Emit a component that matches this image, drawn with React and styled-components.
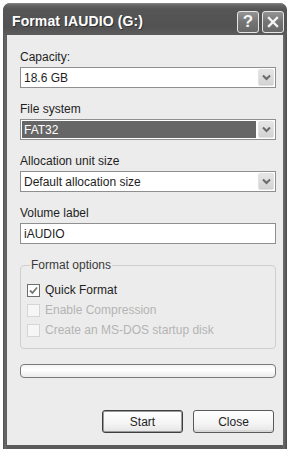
import React from "react";
import styled, { createGlobalStyle } from "styled-components";

const GlobalStyle = createGlobalStyle`
  html, body {
    margin: 0;
    padding: 0;
    background: #ffffff;
  }
  body {
    font-family: "Liberation Sans", Arial, sans-serif;
  }
`;

const Window = styled.div`
  width: 284px;
  height: 446px;
  margin: 3px 0 0 3px;
  box-sizing: border-box;
  border-radius: 7px 7px 0 0;
  background: linear-gradient(90deg, #4e4e4e 0px, #6a6a6a 2px, #5a5a5a 4px, #5a5a5a 278px, #6a6a6a 281px, #4a4a4a 284px);
  padding: 0 4px 4px 4px;
  display: flex;
  flex-direction: column;
  overflow: hidden;
`;

const TitleBar = styled.div`
  height: 32px;
  flex-shrink: 0;
  margin: 0 -4px;
  padding: 3px 3px 0 9px;
  box-sizing: border-box;
  display: flex;
  align-items: center;
  background: linear-gradient(180deg, #8a8a8a 0px, #666 2px, #565656 6px, #525252 24px, #5c5c5c 32px);
  border-radius: 7px 7px 0 0;
`;

const Title = styled.div`
  flex: 1;
  color: #fff;
  font-weight: bold;
  font-size: 14px;
  letter-spacing: 0.1px;
  text-shadow: 1px 1px 0 #333;
`;

const TitleButtons = styled.div`
  display: flex;
  gap: 3px;
  margin-top: 2px;
`;

const TitleButton = styled.div`
  width: 22px;
  height: 22px;
  box-sizing: border-box;
  border: 1px solid #e6e6e6;
  border-radius: 3px;
  background: linear-gradient(180deg, #959595 0%, #747474 50%, #686868 100%);
  display: flex;
  align-items: center;
  justify-content: center;
  color: #f4f4f4;
  font-weight: bold;
  font-size: 17px;
`;

const Client = styled.div`
  flex: 1;
  background: #ececec;
  padding: 15px 7px 0 13px;
  display: flex;
  flex-direction: column;
`;

const Field = styled.div`
  display: flex;
  flex-direction: column;
  flex-shrink: 0;
  margin-bottom: 14px;
`;

const Label = styled.div`
  font-size: 12px;
  line-height: 14px;
  color: #1e1e1e;
  margin-bottom: 3px;
`;

const Combo = styled.div`
  height: 21px;
  box-sizing: border-box;
  border: 1px solid #8f8f8f;
  background: #fff;
  display: flex;
  align-items: stretch;
  padding: 1px;
`;

const ComboText = styled.div`
  flex: 1;
  font-size: 12px;
  display: flex;
  align-items: center;
  padding-left: 2px;
  margin-right: 2px;
  color: ${(p) => (p.selected ? "#fff" : "#1e1e1e")};
  background: ${(p) => (p.selected ? "#666" : "transparent")};
`;

const DropButton = styled.div`
  width: 16px;
  box-sizing: border-box;
  border: 1px solid #e2e2e2;
  border-radius: 2px;
  background: linear-gradient(180deg, #e6e6e6 0%, #d2d2d2 100%);
  display: flex;
  align-items: center;
  justify-content: center;
`;

const TextBox = styled.div`
  height: 21px;
  box-sizing: border-box;
  border: 1px solid #8f8f8f;
  background: #fff;
  font-size: 12px;
  display: flex;
  align-items: center;
  padding-left: 3px;
  color: #1e1e1e;
`;

const Group = styled.fieldset`
  margin: 0;
  flex-shrink: 0;
  padding: 8px 6px 8px 6px;
  border: 1px solid #cfcfcf;
  border-radius: 4px;
  display: flex;
  flex-direction: column;
`;

const Legend = styled.legend`
  font-size: 12px;
  line-height: 14px;
  padding: 0 1px;
  margin-left: 3px;
  color: #3a3a3a;
`;

const CheckRow = styled.div`
  height: 20px;
  flex-shrink: 0;
  display: flex;
  align-items: center;
  gap: 5px;
  font-size: 12px;
  color: ${(p) => (p.disabled ? "#b4b4b4" : "#1e1e1e")};
`;

const Box = styled.div`
  width: 13px;
  height: 13px;
  box-sizing: border-box;
  border: 1px solid ${(p) => (p.disabled ? "#d6d6d6" : "#6e6e6e")};
  background: ${(p) => (p.disabled ? "#f6f6f6" : "#fff")};
  display: flex;
  align-items: center;
  justify-content: center;
`;

const Progress = styled.div`
  margin-top: 15px;
  height: 14px;
  flex-shrink: 0;
  box-sizing: border-box;
  border: 1px solid #7a7a7a;
  border-radius: 4px;
  background: linear-gradient(180deg, #f4f4f4 0%, #ffffff 40%, #ececec 100%);
`;

const ButtonRow = styled.div`
  margin-top: 32px;
  display: flex;
  justify-content: flex-end;
  gap: 10px;
  padding-right: 2px;
`;

const Button = styled.div`
  width: 81px;
  height: 23px;
  box-sizing: border-box;
  border: 1px solid ${(p) => (p.primary ? "#3e3e3e" : "#5a5a5a")};
  box-shadow: ${(p) => (p.primary ? "inset 0 0 0 1px #9a9a9a" : "inset 0 -2px 0 #d8d8d8")};
  border-radius: 3px;
  background: linear-gradient(180deg, #ffffff 0%, #f4f4f4 60%, #e4e4e4 100%);
  display: flex;
  align-items: center;
  justify-content: center;
  font-size: 12px;
  color: #1e1e1e;
`;

const Chevron = () => (
  <svg width="9" height="7" viewBox="0 0 9 7">
    <path d="M1 1.5 L4.5 5 L8 1.5" fill="none" stroke="#6a6a6a" strokeWidth="2" />
  </svg>
);

const Check = () => (
  <svg width="9" height="9" viewBox="0 0 9 9">
    <path d="M1 4.5 L3.5 7 L8 1.5" fill="none" stroke="#777" strokeWidth="1.8" />
  </svg>
);

const CloseGlyph = () => (
  <svg width="12" height="12" viewBox="0 0 12 12">
    <path d="M2 2 L10 10 M10 2 L2 10" stroke="#f4f4f4" strokeWidth="2.4" strokeLinecap="square" />
  </svg>
);

const ComboField = ({ label, value, selected }) => (
  <Field>
    <Label>{label}</Label>
    <Combo>
      <ComboText selected={selected}>{value}</ComboText>
      <DropButton>
        <Chevron />
      </DropButton>
    </Combo>
  </Field>
);

const CheckOption = ({ label, checked, disabled }) => (
  <CheckRow disabled={disabled}>
    <Box disabled={disabled}>{checked && <Check />}</Box>
    {label}
  </CheckRow>
);

export default function App() {
  return (
    <>
      <GlobalStyle />
      <Window>
        <TitleBar>
          <Title>Format IAUDIO (G:)</Title>
          <TitleButtons>
            <TitleButton>?</TitleButton>
            <TitleButton>
              <CloseGlyph />
            </TitleButton>
          </TitleButtons>
        </TitleBar>
        <Client>
          <ComboField label="Capacity:" value="18.6 GB" />
          <ComboField label="File system" value="FAT32" selected />
          <ComboField label="Allocation unit size" value="Default allocation size" />
          <Field>
            <Label>Volume label</Label>
            <TextBox>iAUDIO</TextBox>
          </Field>
          <Group>
            <Legend>Format options</Legend>
            <CheckOption label="Quick Format" checked />
            <CheckOption label="Enable Compression" disabled />
            <CheckOption label="Create an MS-DOS startup disk" disabled />
          </Group>
          <Progress />
          <ButtonRow>
            <Button primary>Start</Button>
            <Button>Close</Button>
          </ButtonRow>
        </Client>
      </Window>
    </>
  );
}
